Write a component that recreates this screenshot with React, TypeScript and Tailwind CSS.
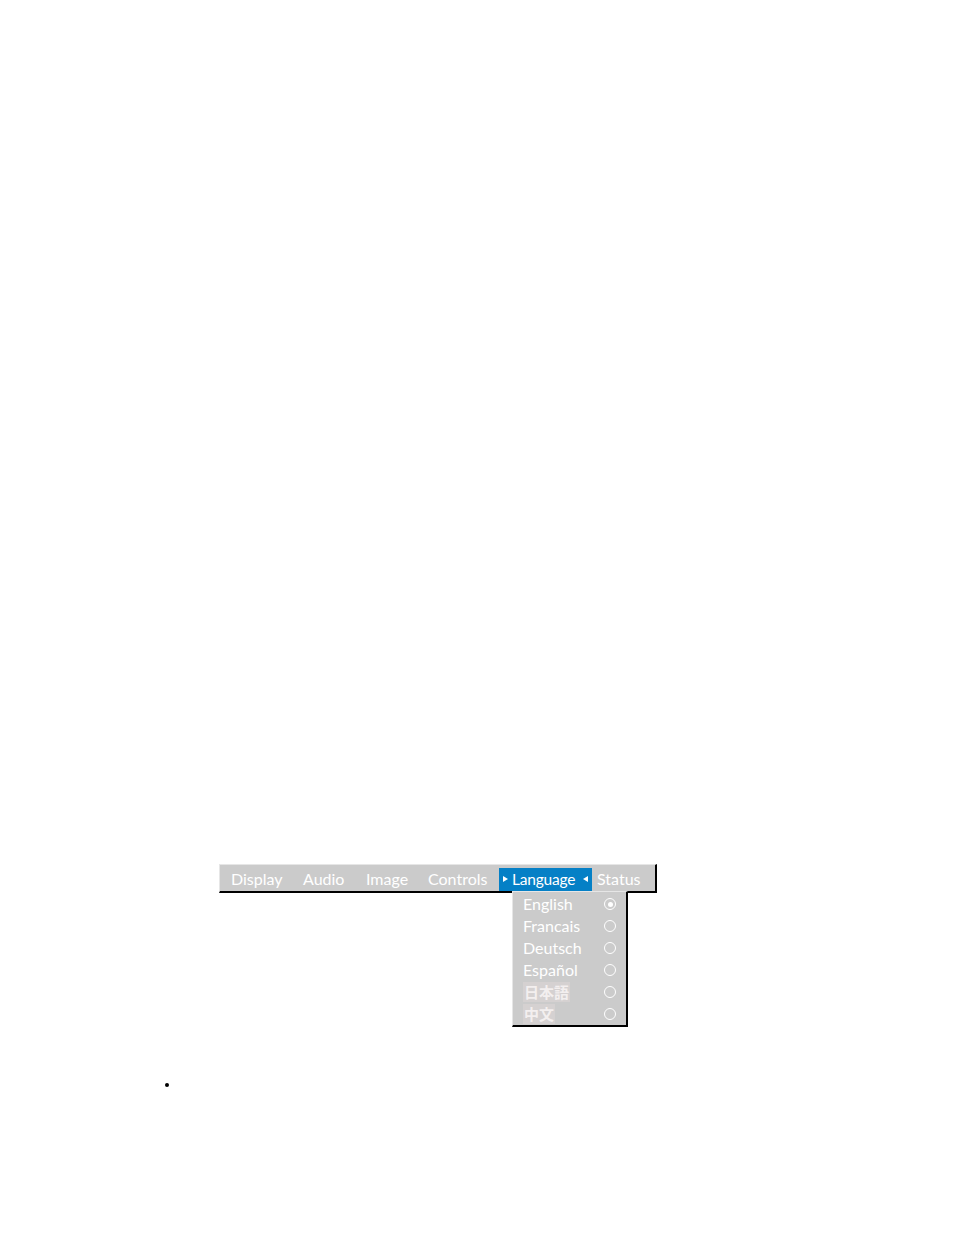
import React from 'react';

const font = { fontFamily: 'Lato, "Noto Sans CJK JP", sans-serif' };

const tabs = [
  { label: 'Display', w: 'w-[72px] pl-[11px]' },
  { label: 'Audio', w: 'w-[63px] pl-[11px]' },
  { label: 'Image', w: 'w-[62px] pl-[11px]' },
  { label: 'Controls', w: 'w-[82px] pl-[11px]' },
];

const languages = [
  { label: 'English', selected: true, cjk: false },
  { label: 'Francais', selected: false, cjk: false },
  { label: 'Deutsch', selected: false, cjk: false },
  { label: 'Español', selected: false, cjk: false },
  { label: '日本語', selected: false, cjk: true },
  { label: '中文', selected: false, cjk: true },
];

const Radio: React.FC<{ on: boolean }> = ({ on }) => (
  <span className="flex h-[12px] w-[12px] items-center justify-center rounded-full border-[1.6px] border-white">
    {on && <span className="h-[5px] w-[5px] rounded-full bg-white" />}
  </span>
);

export default function App() {
  return (
    <div className="min-h-[1235px] w-full bg-white pt-[864px]" style={font}>
      {/* Menu bar */}
      <div className="ml-[219px] flex w-[438px] border-t border-l border-b-2 border-r-2 border-t-[#e6e6e6] border-l-[#e6e6e6] border-b-black border-r-black bg-[#cbcbcb] pt-[3px] text-[16px] text-white">
        {tabs.map((t) => (
          <span key={t.label} className={`h-[23px] leading-[21px] ${t.w}`}>
            {t.label}
          </span>
        ))}
        <span className="flex h-[23px] w-[93px] items-center bg-[#0580c6] pb-[1px] text-white">
          <svg className="ml-[4px] mr-[4px] h-[6px] w-[5px] shrink-0" viewBox="0 0 5 6">
            <path d="M0 0L5 3L0 6Z" fill="white" />
          </svg>
          <span className="text-[15.5px] leading-[21px] tracking-[-0.2px]">Language</span>
          <svg className="ml-auto mr-[4px] h-[6px] w-[5px] shrink-0" viewBox="0 0 5 6">
            <path d="M5 0L0 3L5 6Z" fill="white" />
          </svg>
        </span>
        <span className="h-[23px] w-[61px] pl-[5px] leading-[21px]">Status</span>
      </div>

      {/* Language dropdown */}
      <div className="relative -mt-[2px] ml-[512px] w-[116px] border-l border-t border-b-2 border-r-2 border-l-[#e6e6e6] border-t-[#e6e6e6] border-b-black border-r-black bg-[#cbcbcb] pt-[1px] text-[16px] text-white">
        {languages.map((l) => (
          <div key={l.label} className="flex h-[22px] items-center pl-[10px] pr-[10px]">
            <span className="flex-1">
              {l.cjk ? (
                <span className="bg-[#d5d1d1] px-[1px] py-[1px] text-[15px] font-bold leading-[20px] text-[#f3efef]">
                  {l.label}
                </span>
              ) : (
                <span className="leading-[21px]">{l.label}</span>
              )}
            </span>
            <Radio on={l.selected} />
          </div>
        ))}
      </div>

      {/* Bullet */}
      <div className="ml-[165px] mt-[56px] h-[4px] w-[4px] rounded-full bg-black" />
    </div>
  );
}
